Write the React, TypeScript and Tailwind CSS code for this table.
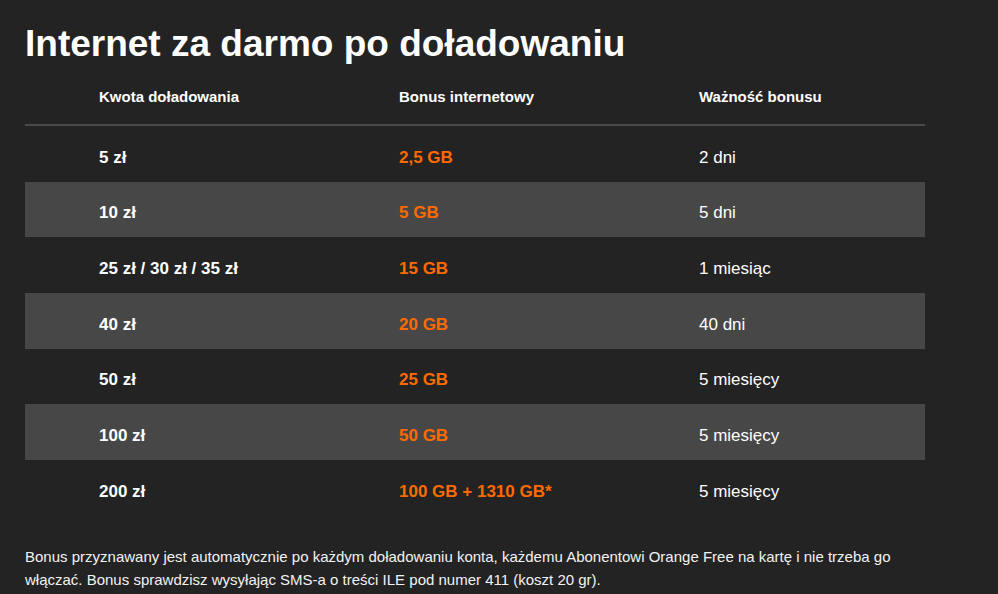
const rows = [
  { amount: "5 zł", bonus: "2,5 GB", valid: "2 dni" },
  { amount: "10 zł", bonus: "5 GB", valid: "5 dni" },
  { amount: "25 zł / 30 zł / 35 zł", bonus: "15 GB", valid: "1 miesiąc" },
  { amount: "40 zł", bonus: "20 GB", valid: "40 dni" },
  { amount: "50 zł", bonus: "25 GB", valid: "5 miesięcy" },
  { amount: "100 zł", bonus: "50 GB", valid: "5 miesięcy" },
  { amount: "200 zł", bonus: "100 GB + 1310 GB*", valid: "5 miesięcy" },
];

export default function App() {
  return (
    <div className="min-h-[594px] bg-[#232323] px-[25px] pt-[21px] text-white font-['Liberation_Sans',Arial,sans-serif]">
      <h1 className="text-[37px] font-bold leading-[45px]">Internet za darmo po doładowaniu</h1>

      {/* Tabela bonusów */}
      <div className="w-[900px]">
        <div className="grid grid-cols-3 h-[60px] items-end pb-[19px] border-b-2 border-[#4a4a4a] text-[15px] leading-[16px] font-bold">
          <div className="pl-[74px]">Kwota doładowania</div>
          <div className="pl-[74px]">Bonus internetowy</div>
          <div className="pl-[74px]">Ważność bonusu</div>
        </div>
        {rows.map((r, i) => (
          <div
            key={i}
            className={`grid grid-cols-3 h-[55.7px] items-center pt-[7px] ${i % 2 === 1 ? "bg-[#474747]" : ""}`}
          >
            <div className="pl-[74px] text-[17px] font-bold">{r.amount}</div>
            <div className="pl-[74px] text-[17px] font-bold text-[#ff6a00]">{r.bonus}</div>
            <div className="pl-[74px] text-[17px]">{r.valid}</div>
          </div>
        ))}
      </div>

      <p className="mt-[29px] w-[900px] text-[15px] leading-[23px] text-[#f2f2f2]">
        Bonus przyznawany jest automatycznie po każdym doładowaniu konta, każdemu Abonentowi Orange Free na kartę i nie trzeba go
        włączać. Bonus sprawdzisz wysyłając SMS-a o treści ILE pod numer 411 (koszt 20 gr).
      </p>
    </div>
  );
}
